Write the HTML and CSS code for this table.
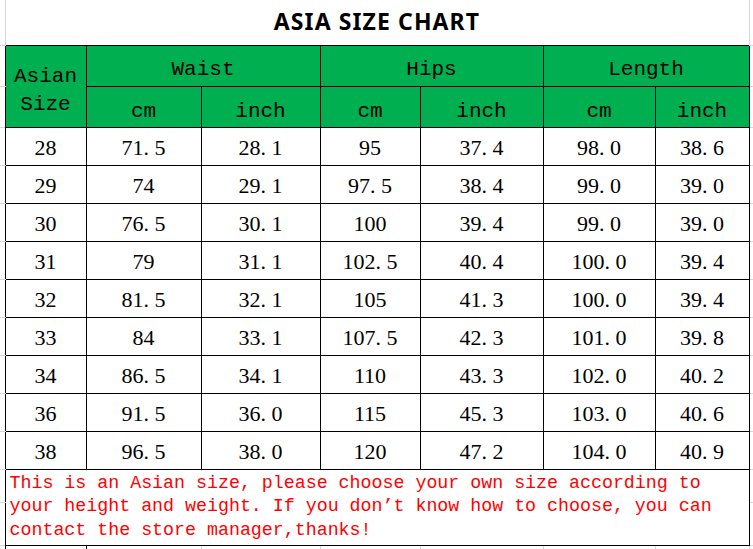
FILE: index.html
```html
<!DOCTYPE html>
<html>
<head>
<meta charset="utf-8">
<link rel="stylesheet" href="styles.css">
</head>
<body>
<table class="sheet">
  <colgroup>
    <col class="c-gut-l"><col class="c-size"><col class="c-wcm"><col class="c-win"><col class="c-hcm"><col class="c-hin"><col class="c-lcm"><col class="c-lin"><col class="c-gut-r">
  </colgroup>
  <tr class="r-title"><td class="gut"></td><td colspan="7" class="title">ASIA SIZE CHART</td><td class="gut"></td></tr>
  <tr class="r-head"><td class="gut"></td><td rowspan="2" class="hd size">Asian<br>Size</td><td colspan="2" class="hd grp">Waist</td><td colspan="2" class="hd grp">Hips</td><td colspan="2" class="hd grp">Length</td><td class="gut"></td></tr>
  <tr class="r-head"><td class="gut"></td><td class="hd sub">cm</td><td class="hd sub">inch</td><td class="hd sub">cm</td><td class="hd sub">inch</td><td class="hd sub">cm</td><td class="hd sub">inch</td><td class="gut"></td></tr>
  <tr class="r-data"><td class="gut"></td><td class="d">28</td><td class="d">71<span class="pt">.</span>5</td><td class="d">28<span class="pt">.</span>1</td><td class="d">95</td><td class="d">37<span class="pt">.</span>4</td><td class="d">98<span class="pt">.</span>0</td><td class="d">38<span class="pt">.</span>6</td><td class="gut"></td></tr>
  <tr class="r-data"><td class="gut"></td><td class="d">29</td><td class="d">74</td><td class="d">29<span class="pt">.</span>1</td><td class="d">97<span class="pt">.</span>5</td><td class="d">38<span class="pt">.</span>4</td><td class="d">99<span class="pt">.</span>0</td><td class="d">39<span class="pt">.</span>0</td><td class="gut"></td></tr>
  <tr class="r-data"><td class="gut"></td><td class="d">30</td><td class="d">76<span class="pt">.</span>5</td><td class="d">30<span class="pt">.</span>1</td><td class="d">100</td><td class="d">39<span class="pt">.</span>4</td><td class="d">99<span class="pt">.</span>0</td><td class="d">39<span class="pt">.</span>0</td><td class="gut"></td></tr>
  <tr class="r-data"><td class="gut"></td><td class="d">31</td><td class="d">79</td><td class="d">31<span class="pt">.</span>1</td><td class="d">102<span class="pt">.</span>5</td><td class="d">40<span class="pt">.</span>4</td><td class="d">100<span class="pt">.</span>0</td><td class="d">39<span class="pt">.</span>4</td><td class="gut"></td></tr>
  <tr class="r-data"><td class="gut"></td><td class="d">32</td><td class="d">81<span class="pt">.</span>5</td><td class="d">32<span class="pt">.</span>1</td><td class="d">105</td><td class="d">41<span class="pt">.</span>3</td><td class="d">100<span class="pt">.</span>0</td><td class="d">39<span class="pt">.</span>4</td><td class="gut"></td></tr>
  <tr class="r-data"><td class="gut"></td><td class="d">33</td><td class="d">84</td><td class="d">33<span class="pt">.</span>1</td><td class="d">107<span class="pt">.</span>5</td><td class="d">42<span class="pt">.</span>3</td><td class="d">101<span class="pt">.</span>0</td><td class="d">39<span class="pt">.</span>8</td><td class="gut"></td></tr>
  <tr class="r-data"><td class="gut"></td><td class="d">34</td><td class="d">86<span class="pt">.</span>5</td><td class="d">34<span class="pt">.</span>1</td><td class="d">110</td><td class="d">43<span class="pt">.</span>3</td><td class="d">102<span class="pt">.</span>0</td><td class="d">40<span class="pt">.</span>2</td><td class="gut"></td></tr>
  <tr class="r-data"><td class="gut"></td><td class="d">36</td><td class="d">91<span class="pt">.</span>5</td><td class="d">36<span class="pt">.</span>0</td><td class="d">115</td><td class="d">45<span class="pt">.</span>3</td><td class="d">103<span class="pt">.</span>0</td><td class="d">40<span class="pt">.</span>6</td><td class="gut"></td></tr>
  <tr class="r-data"><td class="gut"></td><td class="d">38</td><td class="d">96<span class="pt">.</span>5</td><td class="d">38<span class="pt">.</span>0</td><td class="d">120</td><td class="d">47<span class="pt">.</span>2</td><td class="d">104<span class="pt">.</span>0</td><td class="d">40<span class="pt">.</span>9</td><td class="gut"></td></tr>
  <tr class="r-note1"><td class="gut"></td><td colspan="7" rowspan="2" class="note">This is an Asian size, please choose your own size according to your height and weight. If you don’t know how to choose, you can contact the store manager,thanks!</td><td class="gut"></td></tr>
  <tr class="r-note2"><td class="gut"></td><td class="gut"></td></tr>
  <tr class="r-end"><td class="gut"></td><td class="end first"></td><td class="end"></td><td class="end"></td><td class="end"></td><td class="end"></td><td class="end"></td><td class="end"></td><td class="gut"></td></tr>
</table>
</body>
</html>
```

FILE: styles.css
```css
html, body {
  margin: 0;
  padding: 0;
  background: #fff;
  overflow: hidden;
}

.sheet {
  border-collapse: collapse;
  table-layout: fixed;
  width: 753px;
}

.c-gut-l { width: 5px; }
.c-size { width: 81px; }
.c-wcm { width: 115px; }
.c-win { width: 119px; }
.c-hcm { width: 100px; }
.c-hin { width: 123px; }
.c-lcm { width: 112px; }
.c-lin { width: 94px; }
.c-gut-r { width: 4px; }

.r-title { height: 45px; }
.r-head { height: 41px; }
.r-data { height: 38px; }
.r-note1 { height: 33px; }
.r-note2 { height: 43px; }
.r-end { height: 20px; }

td {
  padding: 0;
}

.gut {
  border-bottom: 1px solid #d6d6d6;
}

.title {
  border-left: 1px solid #d6d6d6;
  border-right: 1px solid #d6d6d6;
  text-align: center;
  vertical-align: bottom;
  padding-bottom: 8px;
  font-family: "Noto Sans", "Liberation Sans", sans-serif;
  font-weight: 700;
  font-size: 23px;
  letter-spacing: 1.1px;
  color: #000;
}

.hd {
  border: 1px solid #000;
  background: #00b050;
  color: #000;
  text-align: center;
  vertical-align: bottom;
  font-family: "Liberation Mono", monospace;
  font-size: 21px;
}

.hd.size {
  line-height: 28px;
  padding-bottom: 8px;
}

.hd.grp {
  padding-bottom: 5px;
}

.hd.sub {
  padding-bottom: 4px;
}

.d {
  border: 1px solid #000;
  text-align: center;
  vertical-align: bottom;
  padding-bottom: 4px;
  font-family: "Liberation Serif", serif;
  font-size: 22px;
  color: #000;
}

.pt {
  margin-right: 5.5px;
}

.note {
  border: 1px solid #000;
  vertical-align: top;
  text-align: left;
  padding: 2px 4px 0 4px;
  font-family: "Liberation Mono", monospace;
  font-size: 18.3px;
  line-height: 23.5px;
  color: #ff0000;
}

.end {
  border-right: 1px solid #d6d6d6;
}

.end.first {
  border-left: 1px solid #000;
  border-right: 1px solid #000;
}
```
